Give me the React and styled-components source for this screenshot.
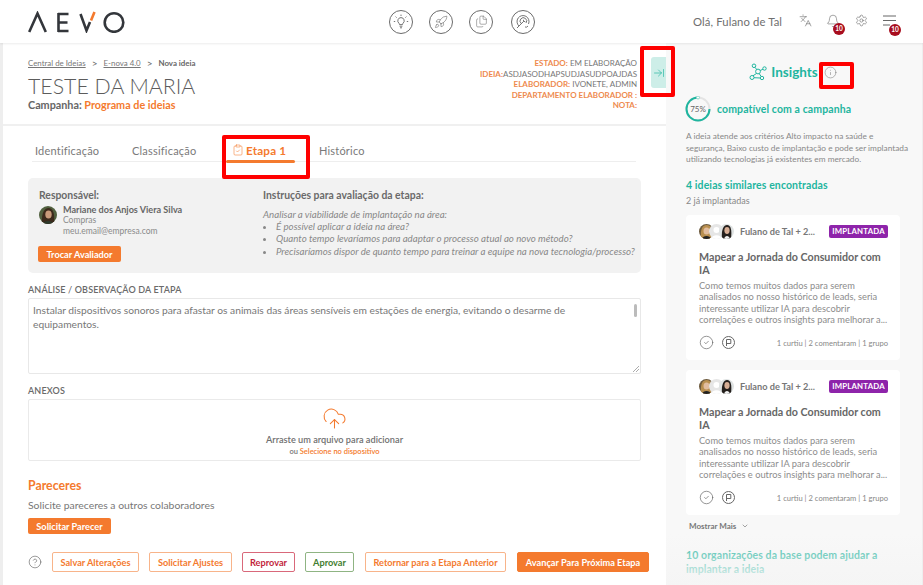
import React from 'react';
import styled, { createGlobalStyle } from 'styled-components';
import { Rocket, Files, Languages, Bell, Settings, ArrowRightToLine, Info, ClipboardCheck, CloudUpload, CircleHelp, CircleCheck, ChevronDown } from 'lucide-react';

const Global = createGlobalStyle`
  html, body { margin: 0; padding: 0; background: #fff; }
  * { box-sizing: border-box; }
  body { font-family: Lato, "Open Sans", sans-serif; color: #6f6f6f; }
`;
const ORANGE = '#f47a2e';
const TEAL = '#1fb59f';

const Page = styled.div`
  width: 923px; height: 585px; overflow: hidden; position: relative; display: flex; flex-direction: column; background: #fff;
`;
const Header = styled.header`
  height: 43px; flex: none; display: flex; align-items: center; padding: 0 0 0 28px; background: #fff; box-shadow: 0 1px 2px rgba(0,0,0,.08); position: relative; z-index: 2;
`;
const LogoBox = styled.div` width: 361px; flex: none; display: flex; `;
const NavIcons = styled.nav` display: flex; gap: 16px; width: 270px; flex: none; `;
const RoundIcon = styled.span`
  width: 24px; height: 24px; border-radius: 50%; border: 1px solid #6b6b6b; display: flex; align-items: center; justify-content: center; color: #666;
  &:last-child { margin-left: 2px; }
`;
const Greeting = styled.span` font-size: 11.3px; color: #6f6f6f; width: 98px; flex: none; margin-left: 34px; margin-top: -1px; letter-spacing: .1px; `;
const UserIcons = styled.div` display: flex; align-items: center; color: #666; `;
const IconSlot = styled.span` position: relative; width: 28px; display: flex; justify-content: center; margin-top: -2px; `;
const Badge = styled.span`
  position: absolute; left: 14px; top: 9px; width: 12px; height: 12px; border-radius: 50%; background: #a80d1e; color: #fff; font-size: 6.5px; font-weight: 700; display: flex; align-items: center; justify-content: center;
`;
const Body = styled.div` flex: 1; display: flex; min-height: 0; `;
const Main = styled.main` width: 666px; flex: none; border-left: 3px solid #eee; display: flex; flex-direction: column; background: #fff; `;
const TopBlock = styled.section`
  height: 83px; flex: none; display: flex; justify-content: space-between; padding: 14px 0 0 25px; border-bottom: 2px solid #f0f0f0; position: relative;
`;
const Crumbs = styled.div` display: flex; align-items: center; gap: 5px; font-size: 7.9px; height: 12px; `;
const CrumbLink = styled.a` color: #777; text-decoration: underline; `;
const CrumbSep = styled.span` font-size: 10px; color: #666; margin: 0 1px; `;
const CrumbNow = styled.b` font-weight: 700; color: #666; `;
const Title = styled.h1` margin: 3px 0 0; font-size: 21.3px; font-weight: 300; line-height: 28px; color: #5c5c5c; `;
const Campaign = styled.div` font-size: 10.8px; font-weight: 700; color: #666; line-height: 12px; margin-top: -1px; `;
const OrangeText = styled.span` color: ${ORANGE}; `;
const MetaRow = styled.div` display: flex; align-items: flex-start; `;
const Meta = styled.div` text-align: right; font-size: 8px; line-height: 10.5px; color: #777; padding-top: 1px; width: 300px; `;
const MetaKey = styled.b` color: #ee8a4e; font-weight: 700; `;
const Toggle = styled.button`
  width: 15px; height: 31px; margin-left: 14px; padding: 0; border: 0; border-radius: 3px 0 0 3px; background: #cdeee8; color: ${TEAL}; display: flex; align-items: center; justify-content: center;
`;
const Content = styled.div` flex: 1; padding: 0 26px 0 25px; `;
const Tabs = styled.div` height: 36px; margin: 0 0 16px 4px; display: flex; align-items: flex-end; border-bottom: 1px solid #eee; width: 604px; `;
const Tab = styled.div`
  width: ${p => p.$w}px; height: 18px; font-size: 11px; padding-left: ${p => p.$pad || 3}px; letter-spacing: .2px; line-height: 15px; color: #7a7a7a; display: flex; gap: 2px; position: relative;
`;
const ActiveTab = styled(Tab)`
  color: ${ORANGE}; font-weight: 700; font-size: 11.7px;
  svg { margin-top: 1px; }
  &::after { content: ''; position: absolute; left: 4px; bottom: -2px; width: 69px; height: 3px; background: ${ORANGE}; border-radius: 2px; }
`;
const Panel = styled.section`
  height: 95px; background: #f2f2f2; border-radius: 5px; padding: 11px 0 0 11px; display: grid; grid-template-columns: 224px 1fr; margin-right: -1px;
`;
const PanelTitle = styled.div` font-size: 10.4px; font-weight: 700; color: #6a6a6a; line-height: 12px; `;
const Person = styled.div` display: flex; gap: 6px; margin-top: 4px; `;
const PersonText = styled.div` font-size: 8.5px; line-height: 10.4px; color: #8a8a8a; `;
const PersonName = styled.div` font-size: 9.1px; font-weight: 700; color: #666; `;
const Avatar = styled.svg` flex: none; margin-top: 1px; border-radius: 50%; `;
const SolidButton = styled.button`
  height: 16px; padding: 0; border: 0; border-radius: 2px; background: ${ORANGE}; color: #fff; font: 700 9.2px Lato, sans-serif; display: block;
`;
const SwapButton = styled(SolidButton)` width: 83px; margin: 10px 0 0 -1px; `;
const Instr = styled.div` font-size: 9.7px; font-style: italic; line-height: 12.2px; color: #888; margin-top: 7px; white-space: nowrap; `;
const InstrList = styled.ul` margin: 0; padding: 0 0 0 13px; `;
const FieldLabel = styled.div` font-size: 9px; font-weight: 600; color: #6a6a6a; line-height: 11px; margin-top: ${p => p.$top}px; letter-spacing: .15px; `;
const TextBox = styled.div`
  height: 76px; margin: 3px -1px 0 0; border: 1px solid #e8e8e8; border-radius: 2px; padding: 4px 30px 4px 4px; font-size: 10.25px; line-height: 14px; color: #777; position: relative;
`;
const Thumb = styled.span` position: absolute; right: 3px; top: 5px; width: 3px; height: 13px; background: #bbb; border-radius: 2px; `;
const Resize = styled.svg` position: absolute; right: 1px; bottom: 1px; `;
const Drop = styled.div`
  height: 62px; margin: 3px -1px 0 0; border: 1px solid #eaeaea; border-radius: 2px; display: flex; flex-direction: column; align-items: center; padding-top: 6px; color: ${ORANGE};
`;
const DropMain = styled.div` font-size: 9.2px; font-weight: 600; color: #6f6f6f; line-height: 11px; margin-top: 3px; `;
const DropSub = styled.div` font-size: 7.5px; font-weight: 600; line-height: 10px; margin-top: 2px; color: #777; `;
const SectionTitle = styled.h3` margin: 17px 0 0; font-size: 12.3px; font-weight: 700; line-height: 15px; color: ${ORANGE}; `;
const Hint = styled.div` font-size: 10.4px; line-height: 13px; margin-top: 6px; color: #777; `;
const AskButton = styled(SolidButton)` width: 83px; margin-top: 6px; `;
const Actions = styled.div` display: flex; align-items: center; margin-top: 18px; color: #555; margin-right: -12px; `;
const ActionButton = styled.button`
  height: 20px; width: ${p => p.$w}px; margin-left: ${p => p.$gap}px; padding: 0; background: ${p => p.$solid ? ORANGE : '#fff'}; color: ${p => p.$solid ? '#fff' : p.$c}; border: 1px solid ${p => p.$solid ? ORANGE : p.$b}; border-radius: 2px; font: 700 9.2px Lato, sans-serif; white-space: nowrap;
`;
const Aside = styled.aside` flex: 1; background: #f8f8f8; padding: 0 23px 0 20px; position: relative; overflow: hidden; border-right: 1px solid #eee; `;
const InsightHead = styled.div` display: flex; align-items: center; justify-content: center; gap: 4px; height: 18px; margin: 20px 0 0 -2px; color: ${TEAL}; padding-left: 3px; `;
const InsightTitle = styled.span` font-size: 13.5px; font-weight: 700; `;
const InfoMark = styled.span` color: #777; display: flex; margin-left: 2px; `;
const Compat = styled.div` display: flex; align-items: center; gap: 6px; margin: 14px 0 0 -1px; height: 28px; `;
const Ring = styled.div` position: relative; width: 26px; height: 26px; `;
const RingLabel = styled.span` position: absolute; inset: 0; display: flex; align-items: center; justify-content: center; font-size: 8px; color: #666; `;
const TealHead = styled.div` font-size: 10.5px; font-weight: 700; color: ${TEAL}; line-height: 14px; letter-spacing: .1px; `;
const Para = styled.p` margin: 8px -10px 0 0; font-size: 8.3px; line-height: 11.6px; color: #888; white-space: nowrap; `;
const Section = styled.div` margin-top: ${p => p.$top}px; `;
const SubNote = styled.div` font-size: 9px; line-height: 11px; margin-top: 3px; color: #888; `;
const Card = styled.article` width: 214px; height: 145px; background: #fff; border-radius: 4px; padding: 10px 12px 0 13px; margin-top: ${p => p.$top}px; display: flex; flex-direction: column; `;
const CardTop = styled.div` display: flex; align-items: center; height: 13px; `;
const Faces = styled.div` display: flex; width: 40px; flex: none; `;
const Face = styled.svg` margin-right: -5px; border-radius: 50%; flex: none; `;
const Author = styled.span` font-size: 9.2px; font-weight: 700; color: #777; flex: 1; margin-left: 1px; white-space: nowrap; `;
const Purple = styled.span` width: 59px; height: 13px; border-radius: 2px; background: #8e24aa; color: #fff; font-size: 7.8px; font-weight: 700; letter-spacing: .2px; display: flex; align-items: center; justify-content: center; `;
const CardTitle = styled.h4` margin: 12px 0 0; font-size: 10.7px; font-weight: 700; line-height: 13px; color: #666; `;
const CardText = styled.p` margin: 4px -4px 0 0; font-size: 9.3px; line-height: 11.4px; color: #8c8c8c; `;
const CardFoot = styled.div` display: flex; align-items: center; margin-top: auto; height: 36px; gap: 8px; color: #666; `;
const Stats = styled.span` margin-left: auto; font-size: 7.6px; color: #888; `;
const More = styled.div` display: flex; align-items: center; gap: 5px; font-size: 8px; font-weight: 700; color: #777; margin: 6px 0 0 3px; line-height: 10px; `;
const LastHead = styled(TealHead)` margin-top: 17px; `;
const LastCard = styled.div` height: 30px; background: #fff; border-radius: 4px; margin-top: 7px; `;
const Fade = styled.div` position: absolute; left: 0; right: 0; bottom: 0; height: 52px; background: linear-gradient(rgba(245,245,245,0), rgba(245,245,245,.97)); `;
const Mark = styled.div`
  position: absolute; left: ${p => p.$x}px; top: ${p => p.$y}px; width: ${p => p.$w}px; height: ${p => p.$h}px; border: 4px solid #f00; border-radius: 2px; z-index: 5; pointer-events: none;
`;

const Logo = () => (
  <svg width="98" height="22" viewBox="0 -1 98 22" fill="none" stroke="#33363b" strokeWidth="2.6">
    <path d="M1.2 20 L9.5 1.5 L17.8 20" />
    <path d="M30 2 H40.5 M30 10.5 H39.5 M30 19 H40.5 M30.5 1 V20" />
    <path d="M52.5 2 L58.5 18.5 L62 10" />
    <path d="M63 8.5 L66.5 0" stroke="#f47a2e" />
    <circle cx="86" cy="10.5" r="9.3" />
  </svg>
);
const BulbIcon = () => (
  <svg width="16" height="16" viewBox="0 0 16 16" fill="none" stroke="#666" strokeWidth=".9">
    <path d="M8 3.6a3.2 3.2 0 0 0-2 5.7c.4.4.5.8.5 1.3h3c0-.5.1-.9.5-1.3A3.2 3.2 0 0 0 8 3.6Z" />
    <path d="M6.6 12.2h2.8M7 13.8h2M8 .6v1.4M2.6 2.6l1 1M13.4 2.6l-1 1M.8 7.5h1.4M13.8 7.5h1.4" />
  </svg>
);
const TargetIcon = () => (
  <svg width="15" height="15" viewBox="0 0 15 15" fill="none" stroke="#666" strokeWidth=".9">
    <path d="M3 12A6 6 0 1 1 12.5 10" />
    <path d="M5.2 9.5A3.3 3.3 0 1 1 10 9" />
    <path d="M1 14 L7.5 7.5 M7.5 7.5 V5.8 M7.5 7.5 H9.2 M9 13a2.5 2.5 0 0 0 3-1" />
  </svg>
);
const NetworkIcon = () => (
  <svg width="18" height="18" viewBox="0 0 18 18" fill="none" stroke="#1fb59f" strokeWidth="1">
    <circle cx="5" cy="2.8" r="1.8" /><circle cx="3" cy="14.5" r="2" /><circle cx="9" cy="8.5" r="2.4" />
    <circle cx="15.5" cy="5.5" r="1.7" /><circle cx="13" cy="15" r="1.7" />
    <path d="M5.8 4.4 7.9 6.4M4 12.8 7.6 10.4M11.2 7.5 14 6.2M10.2 10.6 12.2 13.5M5 14.7 11.3 15" />
  </svg>
);
const PortraitA = ({ s = 18 }) => (
  <Avatar width={s} height={s} viewBox="0 0 18 18">
    <rect width="18" height="18" fill="#51603f" />
    <path d="M3 18 C2 6 6 2 9.5 2 C14 2 16 7 15 18Z" fill="#3c2a1c" />
    <ellipse cx="9.5" cy="8.5" rx="3.2" ry="4" fill="#c99a7b" />
    <path d="M4 18 C5 14 13 14 15 18Z" fill="#2e3a2c" />
  </Avatar>
);
const FaceA = () => (
  <Face width="15" height="15" viewBox="0 0 15 15">
    <rect width="15" height="15" fill="#6d5a3e" />
    <path d="M2 15 C1 4 4 1 7.5 1 C12 1 14 5 13 15Z" fill="#b98f4f" />
    <ellipse cx="7.5" cy="7" rx="3" ry="3.6" fill="#e2bd9f" />
    <path d="M3 15 C4 11 11 11 12 15Z" fill="#222" />
  </Face>
);
const FaceB = () => (
  <Face width="15" height="15" viewBox="0 0 15 15">
    <rect width="15" height="15" fill="#e6e6e6" />
    <circle cx="7.5" cy="6" r="3" fill="#fff" />
    <path d="M2 15 C3 10 12 10 13 15Z" fill="#fff" />
  </Face>
);
const FaceC = () => (
  <Face width="15" height="15" viewBox="0 0 15 15">
    <rect width="15" height="15" fill="#dfe3e3" />
    <path d="M3 15 C2 5 5 1 8 1 C12 1 13 6 12 15Z" fill="#25201d" />
    <ellipse cx="8" cy="6.5" rx="2.6" ry="3.4" fill="#d7ae95" />
    <path d="M5 15 C6 11 10 11 11 15Z" fill="#f3f3f3" />
  </Face>
);
const FlagIcon = () => (
  <svg width="13" height="13" viewBox="0 0 13 13" fill="none" stroke="#666" strokeWidth="1">
    <circle cx="6.5" cy="6.5" r="6" />
    <path d="M4.5 10V3.5H8.8V7.5H4.5" />
  </svg>
);

const IdeaCard = ({ top }) => (
  <Card $top={top}>
    <CardTop>
      <Faces><FaceA /><FaceB /><FaceC /></Faces>
      <Author>Fulano de Tal + 2...</Author>
      <Purple>IMPLANTADA</Purple>
    </CardTop>
    <CardTitle>Mapear a Jornada do Consumidor com IA</CardTitle>
    <CardText>Como temos muitos dados para serem analisados no nosso histórico de leads, seria interessante utilizar IA para descobrir correlações e outros insights para melhorar a...</CardText>
    <CardFoot>
      <CircleCheck size={15} strokeWidth={1.1} />
      <FlagIcon />
      <Stats>1 curtiu | 2 comentaram | 1 grupo</Stats>
    </CardFoot>
  </Card>
);

export default function App() {
  return (
    <Page>
      <Global />
      <Header>
        <LogoBox><Logo /></LogoBox>
        <NavIcons>
          <RoundIcon><BulbIcon /></RoundIcon>
          <RoundIcon><Rocket size={14} strokeWidth={1} /></RoundIcon>
          <RoundIcon><Files size={13} strokeWidth={1} /></RoundIcon>
          <RoundIcon><TargetIcon /></RoundIcon>
        </NavIcons>
        <Greeting>Olá, Fulano de Tal</Greeting>
        <UserIcons>
          <IconSlot><Languages size={13} strokeWidth={1.1} /></IconSlot>
          <IconSlot><Bell size={14} strokeWidth={1} /><Badge>10</Badge></IconSlot>
          <IconSlot><Settings size={13} strokeWidth={1.1} /></IconSlot>
          <IconSlot>
            <svg width="14" height="12" viewBox="0 0 14 12" fill="none" stroke="#666" strokeWidth="1"><path d="M1 1H14M1 5.5H14M1 10H8" /></svg>
            <Badge>10</Badge>
          </IconSlot>
        </UserIcons>
      </Header>
      <Body>
        <Main>
          <TopBlock>
            <div>
              <Crumbs>
                <CrumbLink>Central de Ideias</CrumbLink><CrumbSep>&gt;</CrumbSep>
                <CrumbLink>E-nova 4.0</CrumbLink><CrumbSep>&gt;</CrumbSep>
                <CrumbNow>Nova ideia</CrumbNow>
              </Crumbs>
              <Title>TESTE DA MARIA</Title>
              <Campaign>Campanha: <OrangeText>Programa de ideias</OrangeText></Campaign>
            </div>
            <MetaRow>
              <Meta>
                <div><MetaKey>ESTADO:</MetaKey> EM ELABORAÇÃO</div>
                <div><MetaKey>IDEIA:</MetaKey>ASDJASODHAPSUDJASUDPOAJDAS</div>
                <div><MetaKey>ELABORADOR:</MetaKey> IVONETE, ADMIN</div>
                <div><MetaKey>DEPARTAMENTO ELABORADOR :</MetaKey></div>
                <div><MetaKey>NOTA:</MetaKey></div>
              </Meta>
              <Toggle><ArrowRightToLine size={12} strokeWidth={1.3} /></Toggle>
            </MetaRow>
          </TopBlock>
          <Content>
            <Tabs>
              <Tab $w={97}>Identificação</Tab>
              <Tab $w={93}>Classificação</Tab>
              <ActiveTab $w={94} $pad={10}><ClipboardCheck size={12} strokeWidth={1.1} />Etapa 1</ActiveTab>
              <Tab $w={80}>Histórico</Tab>
            </Tabs>
            <Panel>
              <div>
                <PanelTitle>Responsável:</PanelTitle>
                <Person>
                  <PortraitA />
                  <PersonText>
                    <PersonName>Mariane dos Anjos Viera Silva</PersonName>
                    <div>Compras</div>
                    <div>meu.email@empresa.com</div>
                  </PersonText>
                </Person>
                <SwapButton>Trocar Avaliador</SwapButton>
              </div>
              <div>
                <PanelTitle>Instruções para avaliação da etapa:</PanelTitle>
                <Instr>
                  Analisar a viabilidade de implantação na área:
                  <InstrList>
                    <li>É possível aplicar a ideia na área?</li>
                    <li>Quanto tempo levaríamos para adaptar o processo atual ao novo método?</li>
                    <li>Precisaríamos dispor de quanto tempo para treinar a equipe na nova tecnologia/processo?</li>
                  </InstrList>
                </Instr>
              </div>
            </Panel>
            <FieldLabel $top={11}>ANÁLISE / OBSERVAÇÃO DA ETAPA</FieldLabel>
            <TextBox>
              Instalar dispositivos sonoros para afastar os animais das áreas sensíveis em estações de energia, evitando o desarme de equipamentos.
              <Thumb />
              <Resize width="6" height="6" viewBox="0 0 6 6" fill="none" stroke="#888" strokeWidth=".7"><path d="M0 6L6 0M3 6L6 3" /></Resize>
            </TextBox>
            <FieldLabel $top={11}>ANEXOS</FieldLabel>
            <Drop>
              <CloudUpload size={25} strokeWidth={1} />
              <DropMain>Arraste um arquivo para adicionar</DropMain>
              <DropSub>ou <OrangeText>Selecione no dispositivo</OrangeText></DropSub>
            </Drop>
            <SectionTitle>Pareceres</SectionTitle>
            <Hint>Solicite pareceres a outros colaboradores</Hint>
            <AskButton>Solicitar Parecer</AskButton>
            <Actions>
              <CircleHelp size={14} strokeWidth={1} />
              <ActionButton $w={87} $gap={10} $c="#f47a2e" $b="#f8b48a">Salvar Alterações</ActionButton>
              <ActionButton $w={83} $gap={10} $c="#f47a2e" $b="#f8b48a">Solicitar Ajustes</ActionButton>
              <ActionButton $w={53} $gap={10} $c="#c2253c" $b="#d9687a">Reprovar</ActionButton>
              <ActionButton $w={49} $gap={10} $c="#3f7d2f" $b="#8fb483">Aprovar</ActionButton>
              <ActionButton $w={141} $gap={11} $c="#f47a2e" $b="#f8b48a">Retornar para a Etapa Anterior</ActionButton>
              <ActionButton $w={132} $gap={11} $solid>Avançar Para Próxima Etapa</ActionButton>
            </Actions>
          </Content>
        </Main>
        <Aside>
          <InsightHead>
            <NetworkIcon />
            <InsightTitle>Insights</InsightTitle>
            <InfoMark><Info size={13} strokeWidth={1} /></InfoMark>
          </InsightHead>
          <Compat>
            <Ring>
              <svg width="26" height="26" viewBox="0 0 26 26" fill="none">
                <circle cx="13" cy="13" r="11.5" stroke="#e4e4e4" strokeWidth="2" />
                <path d="M13 1.5 A11.5 11.5 0 1 0 24.5 13" stroke="#1fb59f" strokeWidth="2" />
                <circle cx="13" cy="1.5" r="1.5" fill="#fff" stroke="#8fd9cd" />
              </svg>
              <RingLabel>75%</RingLabel>
            </Ring>
            <TealHead>compatível com a campanha</TealHead>
          </Compat>
          <Para>A ideia atende aos critérios Alto impacto na saúde e<br />segurança, Baixo custo de implantação e pode ser implantada<br />utilizando tecnologias já existentes em mercado.</Para>
          <Section $top={12}>
            <TealHead>4 ideias similares encontradas</TealHead>
            <SubNote>2 já implantadas</SubNote>
          </Section>
          <IdeaCard top={9} />
          <IdeaCard top={10} />
          <More>Mostrar Mais <ChevronDown size={8} /></More>
          <LastHead>10 organizações da base podem ajudar a implantar a ideia</LastHead>
          <LastCard />
          <Fade />
        </Aside>
      </Body>
      <Mark $x={640} $y={46} $w={35} $h={51} />
      <Mark $x={819} $y={62} $w={35} $h={27} />
      <Mark $x={222} $y={135} $w={88} $h={44} />
    </Page>
  );
}
